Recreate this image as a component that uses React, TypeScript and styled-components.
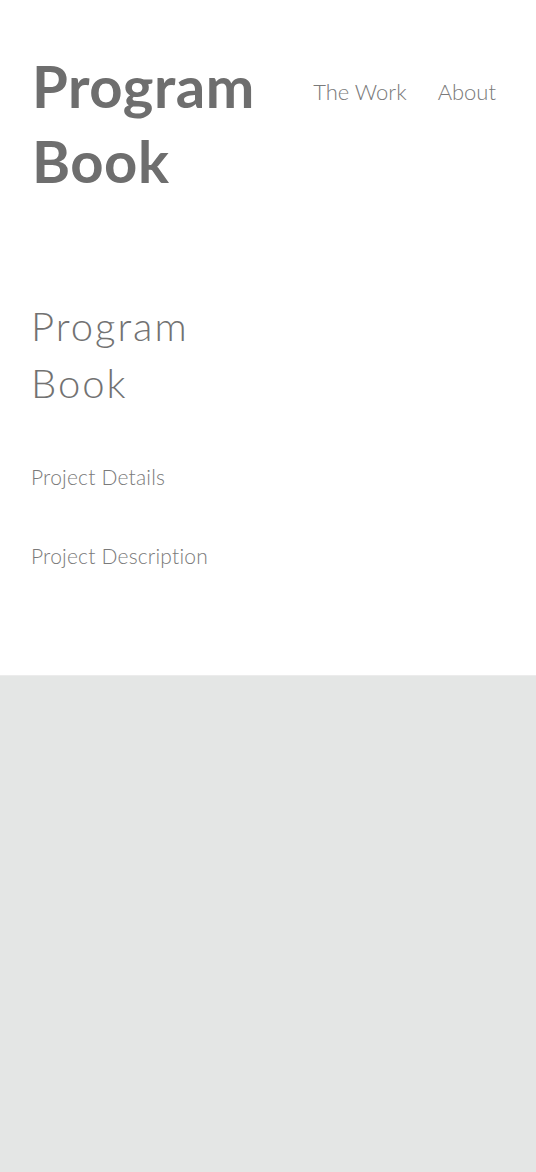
import React from "react";
import styled, { createGlobalStyle } from "styled-components";

const Global = createGlobalStyle`
  html, body { margin: 0; padding: 0; background: #ffffff; }
  body { font-family: "Lato", "Noto Sans", sans-serif; color: #727272; }
`;

const Page = styled.div`
  display: flex;
  flex-direction: column;
  min-height: 1172px;
`;

const Header = styled.header`
  display: flex;
  align-items: flex-start;
  justify-content: space-between;
  padding: 48px 40px 0 32px;
`;

const SiteTitle = styled.h1`
  margin: 0;
  font-size: 58px;
  line-height: 75px;
  font-weight: 700;
  color: #6e6e6e;
  letter-spacing: 0.5px;
`;

const Nav = styled.nav`
  display: flex;
  gap: 31px;
  padding-top: 30px;
`;

const NavLink = styled.a`
  font-size: 22px;
  font-weight: 300;
  color: #7a7a7a;
  text-decoration: none;
`;

const Content = styled.main`
  padding: 100px 31px 0;
  height: 477px;
  box-sizing: border-box;
`;

const ProjectTitle = styled.h2`
  margin: 0 0 52px;
  font-size: 40px;
  line-height: 57px;
  font-weight: 300;
  letter-spacing: 2px;
  color: #727272;
`;

const Label = styled.p`
  margin: 0 0 54px;
  font-size: 21px;
  line-height: 25px;
  font-weight: 300;
  letter-spacing: 0.2px;
  color: #7a7a7a;
`;

const Footer = styled.div`
  flex: 1;
  background: #e4e6e5;
  border-top: 1px solid #ececec;
`;

export default function App() {
  return (
    <>
      <Global />
      <Page>
        <Header>
          <SiteTitle>
            Program
            <br />
            Book
          </SiteTitle>
          <Nav>
            <NavLink href="#">The Work</NavLink>
            <NavLink href="#">About</NavLink>
          </Nav>
        </Header>
        <Content>
          <ProjectTitle>
            Program
            <br />
            Book
          </ProjectTitle>
          <Label>Project Details</Label>
          <Label>Project Description</Label>
        </Content>
        <Footer />
      </Page>
    </>
  );
}
